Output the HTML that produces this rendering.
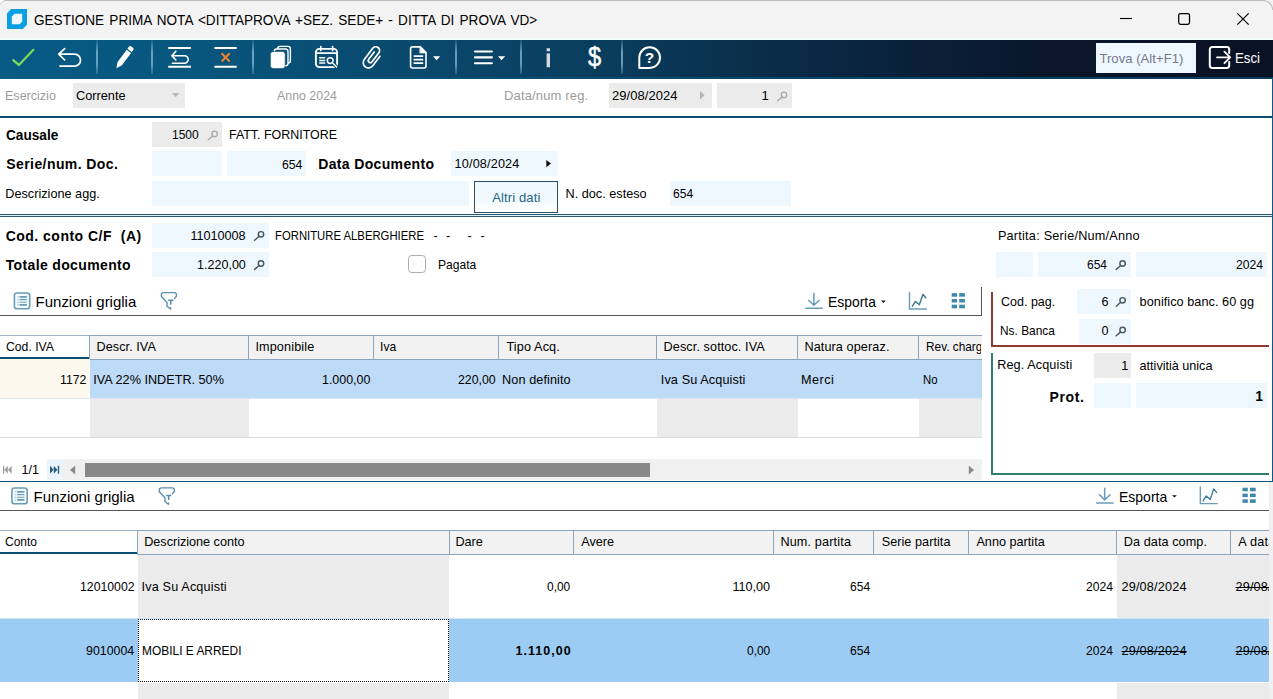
<!DOCTYPE html>
<html>
<head>
<meta charset="utf-8">
<title>Gestione Prima Nota</title>
<style>
*{box-sizing:border-box;margin:0;padding:0}
html,body{width:1273px;height:699px;overflow:hidden;background:#fff}
body{font-family:"Liberation Sans",sans-serif;font-size:12px;color:#000;position:relative}
.a{position:absolute;white-space:nowrap}
.f{position:absolute;background:#eef7fe}
.fg{position:absolute;background:#ebebeb}
.ln{position:absolute}
svg{position:absolute;overflow:visible}
.sep{position:absolute;top:40px;width:2px;height:34px;background:linear-gradient(180deg,rgba(120,175,205,.15),rgba(125,180,210,.8) 35%,rgba(125,180,210,.8) 70%,rgba(120,175,205,.25))}
.hc{position:absolute;background:#f2f2f2;border:1px solid #8ea4bc;border-right:none}
</style>
</head>
<body>
<!-- TITLE BAR -->
<div class="a" style="left:0;top:0;width:1273px;height:38px;background:#f3f3f3"></div>
<div class="a" style="left:4px;top:0;width:1260px;height:1px;background:#bdbdbd"></div>
<div class="a" style="left:0;top:38px;width:1273px;height:2px;background:#f4fbfd"></div>
<svg style="left:0;top:0" width="6" height="6" viewBox="0 0 6 6"><path d="M0 0H5L0 4Z" fill="#fff"/><path d="M0 4.2L5.2 0" stroke="#c4c4c4" stroke-width="1" fill="none"/></svg>
<svg style="left:1261px;top:0" width="12" height="12" viewBox="0 0 12 12"><path d="M2 0.5A9.5 9.5 0 0 1 11.6 10" stroke="#c2c2c2" stroke-width="1.2" fill="none"/></svg>
<svg style="left:7px;top:9px" width="20" height="20" viewBox="0 0 20 20"><path d="M4.2 0H20V15.8L15.8 20H0V4.2Z" fill="#0a9fe0"/><path d="M7.6 4.8H15.2V12.6L12.6 15.2H4.8V7.6Z" fill="#eef8fd"/></svg>
<svg style="left:1120px;top:12px" width="12" height="12" viewBox="0 0 12 12"><path d="M0 6.5H12" stroke="#000" stroke-width="1.1"/></svg>
<svg style="left:1178px;top:13px" width="12" height="12" viewBox="0 0 12 12"><rect x="0.7" y="0.6" width="10.8" height="10.7" rx="1.7" fill="none" stroke="#000" stroke-width="1.25"/></svg>
<svg style="left:1237px;top:13px" width="12" height="12" viewBox="0 0 12 12"><path d="M0.3 0.3L11.7 11.7M11.7 0.3L0.3 11.7" stroke="#000" stroke-width="1.2"/></svg>

<!-- TOOLBAR -->
<div class="a" style="left:0;top:40px;width:1273px;height:38px;background:linear-gradient(90deg,#075b85 0%,#08567e 15%,#0a4c71 28%,#0a4365 40%,#0a3a59 50%,#0a2d49 60%,#0a223b 70%,#0a182d 80%,#0a1327 90%,#0a1225 100%)"></div>
<div class="a" style="left:0;top:77px;width:1273px;height:1.5px;background:linear-gradient(90deg,#0a5a82,#0b4568 60%,#0c3a58)"></div>
<div class="sep" style="left:96px"></div>
<div class="sep" style="left:151px"></div>
<div class="sep" style="left:252px"></div>
<div class="sep" style="left:455px"></div>
<div class="sep" style="left:520px"></div>
<div class="sep" style="left:621px"></div>
<svg style="left:0;top:40px" width="700" height="38" viewBox="0 40 700 38" fill="none" stroke-linecap="round" stroke-linejoin="round">
<!-- check -->
<path d="M12.6 59.6L18.9 64.9L33.9 49.3" stroke="#7fdc5a" stroke-width="2.2" stroke-linecap="butt" stroke-linejoin="miter"/>
<!-- undo -->
<path d="M64.7 48.6L58.7 54.2L64.7 60M58.9 54.2H74.6A5.95 5.95 0 0 1 74.6 66.1H60" stroke="#fff" stroke-width="1.7"/>
<!-- pencil -->
<g transform="translate(116.4,68.2) rotate(36.5)" fill="#fff" stroke="none"><path d="M0 0L-2.7 -5.6V-21H2.7V-5.6Z"/><path d="M-2.7 -22.2V-24.6A1.8 1.8 0 0 1 -0.9 -26.4H0.9A1.8 1.8 0 0 1 2.7 -24.6V-22.2Z"/></g>
<!-- row undo -->
<path d="M168.2 47.9H190.9M168.2 66.8H190.9" stroke="#fff" stroke-width="2" stroke-linecap="butt"/>
<path d="M175.8 51.4L171.8 55.7L175.8 59.9M172 55.7H184.4A3.8 3.8 0 0 1 184.4 63.3H172.4" stroke="#fff" stroke-width="1.6"/>
<!-- row delete -->
<path d="M214.4 47.9H236.7M214.4 66.8H236.7" stroke="#fff" stroke-width="2" stroke-linecap="butt"/>
<path d="M221.6 53.3L229.7 61.5M229.7 53.3L221.6 61.5" stroke="#f0802f" stroke-width="2" stroke-linecap="butt"/>
<!-- copy -->
<rect x="277.6" y="46.4" width="12.8" height="16.6" rx="2.6" stroke="#fff" stroke-width="1.4"/>
<rect x="274.2" y="49" width="13.8" height="16.8" rx="2.6" fill="#0a4f75" stroke="#fff" stroke-width="1.4"/>
<rect x="270.4" y="51.4" width="14.8" height="17.2" rx="3" fill="#fff" stroke="#0a4f75" stroke-width="0.6"/>
<!-- calendar -->
<rect x="315.9" y="48.9" width="21.2" height="18.2" rx="3.4" stroke="#fff" stroke-width="1.9"/>
<path d="M315.8 53.2H337.2" stroke="#fff" stroke-width="1.7"/>
<path d="M320.8 46.6V50.4M332.6 46.6V50.4" stroke="#fff" stroke-width="1.7"/>
<path d="M319.2 57.8H325.2M319.2 60.4H325.2M319.2 63H325.2" stroke="#fff" stroke-width="1.5" stroke-linecap="butt"/>
<circle cx="330.2" cy="60.6" r="2.9" fill="#0a4568" stroke="#fff" stroke-width="1.5"/>
<path d="M332.4 62.8L336.8 67.2" stroke="#0a4568" stroke-width="3.4" stroke-linecap="butt"/>
<path d="M332.4 62.8L336.6 67" stroke="#fff" stroke-width="1.6"/>
<!-- paperclip -->
<g transform="translate(372.5,57.4) rotate(37)" stroke="#fff" stroke-width="1.7"><path d="M5.3 -5.4V6.6A5.3 5.3 0 0 1 -5.3 6.6V-7.4A3.8 3.8 0 0 1 2.3 -7.4V3.8A2.1 2.1 0 0 1 -1.9 3.8V-5.4"/></g>
<!-- document -->
<path d="M412.6 46.9H420.4L426 52.6V66A2 2 0 0 1 424 68H412.6A2 2 0 0 1 410.6 66V48.9A2 2 0 0 1 412.6 46.9Z" stroke="#fff" stroke-width="1.6"/>
<path d="M420.2 46.6L426.4 52.9H420.2Z" fill="#fff" stroke="#fff" stroke-width="0.8"/>
<path d="M413.6 56.1H423.2M413.6 59.6H423.2M413.6 63.1H423.2" stroke="#fff" stroke-width="1.7" stroke-linecap="butt"/>
<path d="M433 56.2H440.2L436.6 60.2Z" fill="#fff" stroke="none"/>
<!-- hamburger -->
<path d="M475 51.5H491.9M475 57.4H491.9M475 63.3H491.9" stroke="#fff" stroke-width="2.1"/>
<path d="M498 56.3H505.2L501.6 60.2Z" fill="#fff" stroke="none"/>
<!-- info -->
<rect x="546.6" y="48.3" width="3.4" height="2.9" fill="#d5dadf" stroke="none"/>
<rect x="546.6" y="53.4" width="3.4" height="13.8" fill="#d5dadf" stroke="none"/>
<!-- help -->
<path d="M649.7 47.3A10.3 10.3 0 0 1 649.7 67.9H639.3V57.6A10.3 10.3 0 0 1 649.7 47.3Z" stroke="#fff" stroke-width="2"/>
</svg>
<div class="a" id="dol" style="-webkit-text-stroke:0.45px #fff;left:588px;top:42.6px;font-size:27px;line-height:28px;color:#fff;transform-origin:0 0;transform:scaleX(0.88)">$</div>
<div class="a" id="qm" style="left:644.8px;top:49.6px;font-size:15.5px;line-height:16px;color:#fff;font-weight:bold">?</div>
<div class="a" style="left:1096px;top:43px;width:100px;height:30px;background:#eef7fe"></div>
<svg style="left:1200px;top:40px" width="40" height="38" viewBox="1200 40 40 38" fill="none" stroke="#fff" stroke-linecap="round" stroke-linejoin="round">
<path d="M1229.2 53V49.4A2.4 2.4 0 0 0 1226.8 47H1212.2A2.4 2.4 0 0 0 1209.8 49.4V65.6A2.4 2.4 0 0 0 1212.2 68H1226.8A2.4 2.4 0 0 0 1229.2 65.6V62" stroke-width="2"/>
<path d="M1217 57.4H1229.8M1224.4 51.6L1230.2 57.4L1224.4 63.2" stroke-width="1.8"/>
</svg>

<!-- ROW 1 -->
<div class="fg" style="left:73px;top:83px;width:112px;height:25px"></div>
<svg style="left:171.6px;top:93px" width="8" height="5" viewBox="0 0 8 5"><path d="M0 0H7.4L3.7 4.2Z" fill="#b8b8b8"/></svg>
<div class="fg" style="left:609px;top:83px;width:103px;height:25px"></div>
<svg style="left:700px;top:91px" width="5" height="9" viewBox="0 0 5 9"><path d="M0 0L4.6 4.2L0 8.4Z" fill="#b4b4b4"/></svg>
<div class="fg" style="left:717px;top:83px;width:75px;height:25px"></div>
<div class="ln" style="left:0;top:116px;width:1273px;height:2px;background:#0a4e74"></div>

<!-- CAUSALE SECTION -->
<div class="fg" style="left:152px;top:122px;width:70px;height:25px"></div>
<div class="f" style="left:152px;top:151px;width:70px;height:25px"></div>
<div class="f" style="left:227px;top:151px;width:79px;height:25px"></div>
<div class="f" style="left:451px;top:151px;width:107px;height:25px"></div>
<svg style="left:546px;top:160px" width="6" height="8" viewBox="0 0 6 8"><path d="M0.3 0L5 3.6L0.3 7.2Z" fill="#111"/></svg>
<div class="f" style="left:152px;top:181px;width:317px;height:25px"></div>
<div class="f" style="left:670px;top:181px;width:121px;height:25px"></div>
<div class="a" style="left:474px;top:181px;width:84.4px;height:32px;background:linear-gradient(180deg,#edf7fe 0%,#f2f9fe 60%,#fff 100%);border:1px solid #2a4f66"></div>
<div class="ln" style="left:0;top:214px;width:1273px;height:3px;background:#d8f4fa;border-top:1px solid #2d5870;border-bottom:1px solid #2d5870"></div>


<!-- CONTO SECTION -->
<div class="f" style="left:152px;top:223px;width:117px;height:25px"></div>
<div class="f" style="left:152px;top:252px;width:117px;height:25px"></div>
<div class="a" style="left:407.8px;top:255.4px;width:17.8px;height:18px;border:1.3px solid #adadad;border-radius:3.5px;background:#fdfdfd"></div>
<div class="f" style="left:996px;top:252px;width:37px;height:25px"></div>
<div class="f" style="left:1038px;top:252px;width:93px;height:25px"></div>
<div class="f" style="left:1136px;top:252px;width:131px;height:25px"></div>

<!-- GRID 1 toolbar -->
<div class="ln" style="left:0;top:315px;width:982px;height:1px;background:#555"></div>
<div class="ln" style="left:981px;top:287px;width:1px;height:29px;background:#555"></div>

<!-- GRID 1 -->
<div class="a" style="left:0;top:335px;width:89px;height:24px;border-top:1px solid #9fb2c6;border-bottom:2px solid #0a4e74;background:#fff"></div>
<div class="hc" style="left:89px;top:335px;width:160px;height:25px"></div>
<div class="hc" style="left:248px;top:335px;width:126px;height:25px"></div>
<div class="hc" style="left:373px;top:335px;width:126px;height:25px"></div>
<div class="hc" style="left:498px;top:335px;width:159px;height:25px"></div>
<div class="hc" style="left:656px;top:335px;width:142px;height:25px"></div>
<div class="hc" style="left:797px;top:335px;width:122px;height:25px"></div>
<div class="hc" style="left:918px;top:335px;width:64px;height:25px"></div>
<div class="a" style="left:0;top:359px;width:90px;height:39px;background:#fdf8ee"></div>
<div class="a" style="left:90px;top:360px;width:892px;height:38px;background:#bddaf7"></div>
<div class="a" style="left:0;top:398px;width:982px;height:1px;background:#dfe5ec"></div>
<div class="fg" style="left:90px;top:399px;width:159px;height:38px"></div>
<div class="fg" style="left:657px;top:399px;width:141px;height:38px"></div>
<div class="fg" style="left:919px;top:399px;width:63px;height:38px"></div>
<div class="ln" style="left:0;top:437px;width:982px;height:1px;background:#dcdcdc"></div>
<!-- pager -->
<div class="a" style="left:62px;top:458.7px;width:919.8px;height:21.6px;background:#f0f0f0"></div>
<div class="a" style="left:47.2px;top:458.7px;width:15px;height:21.6px;background:#eaf4fc"></div>
<div class="a" style="left:85px;top:462.8px;width:564.8px;height:14px;background:#888"></div>
<svg style="left:0;top:458px" width="982" height="24" viewBox="0 458 982 24">
<path d="M3 465.8H4.2V473.8H3ZM7.8 465.8V473.8L4.3 469.8ZM11.6 465.8V473.8L8 469.8Z" fill="#9c9c9c"/>
<path d="M50 465.8V473.8L53.6 469.8ZM53.8 465.8V473.8L57.4 469.8ZM57.8 465.8H59.2V473.8H57.8Z" fill="#2a5f7c"/>
<path d="M75.2 465.4V474.4L70 469.9Z" fill="#8a8a8a"/>
<path d="M968.8 465.4V474.4L974 469.9Z" fill="#8a8a8a"/>
</svg>
<div class="ln" style="left:0;top:480.6px;width:1273px;height:1.4px;background:#0d4f78"></div>

<!-- GRID 2 toolbar -->
<div class="ln" style="left:0;top:510px;width:1269px;height:1px;background:#555"></div>

<!-- GRID 2 -->
<div class="a" style="left:0;top:530px;width:137px;height:24px;border-top:1px solid #9fb2c6;border-bottom:2px solid #0a4e74;background:#fff"></div>
<div class="hc" style="left:137px;top:530px;width:313px;height:25px"></div>
<div class="hc" style="left:449px;top:530px;width:125px;height:25px"></div>
<div class="hc" style="left:573px;top:530px;width:201px;height:25px"></div>
<div class="hc" style="left:773px;top:530px;width:101px;height:25px"></div>
<div class="hc" style="left:873px;top:530px;width:96px;height:25px"></div>
<div class="hc" style="left:968px;top:530px;width:149px;height:25px"></div>
<div class="hc" style="left:1116px;top:530px;width:115px;height:25px"></div>
<div class="hc" style="left:1230px;top:530px;width:39px;height:25px"></div>
<div class="fg" style="left:138px;top:555px;width:311px;height:63.5px"></div>
<div class="fg" style="left:1117px;top:555px;width:152px;height:63px"></div>
<div class="a" style="left:0;top:618px;width:1269px;height:1px;background:#cde3f8"></div>
<div class="a" style="left:0;top:619px;width:1269px;height:63px;background:#9ccbf3"></div>
<div class="a" style="left:138px;top:619px;width:311px;height:63px;background:#fff;border:1px dotted #111"></div>
<div class="fg" style="left:138px;top:683px;width:311px;height:16px"></div>
<div class="fg" style="left:1117px;top:683px;width:152px;height:16px"></div>

<!-- RIGHT PANEL fields -->
<div class="f" style="left:1077px;top:289px;width:54px;height:25px"></div>
<div class="f" style="left:1079px;top:319px;width:52px;height:24.5px"></div>
<div class="fg" style="left:1094px;top:353px;width:37px;height:25px"></div>
<div class="f" style="left:1094px;top:383px;width:37px;height:25px"></div>
<div class="f" style="left:1136px;top:383px;width:131px;height:25px"></div>

<!-- magnifiers -->
<svg style="left:0;top:0" width="1273" height="699" viewBox="0 0 1273 699" fill="none" stroke-linecap="round">
<g stroke="#4a5663" stroke-width="1.45">
<g id="mg"><circle cx="261" cy="234.3" r="2.7"/><path d="M259.1 236.3L254.6 240.2"/></g>
<g transform="translate(0,29.2)"><circle cx="261" cy="234.3" r="2.7"/><path d="M259.1 236.3L254.6 240.2"/></g>
<g transform="translate(861.6,29.2)"><circle cx="261" cy="234.3" r="2.7"/><path d="M259.1 236.3L254.6 240.2"/></g>
<g transform="translate(861.6,66)"><circle cx="261" cy="234.3" r="2.7"/><path d="M259.1 236.3L254.6 240.2"/></g>
<g transform="translate(861.6,95.6)"><circle cx="261" cy="234.3" r="2.7"/><path d="M259.1 236.3L254.6 240.2"/></g>
</g>
<g stroke="#a9a9a9" stroke-width="1.3">
<g transform="translate(-46.4,-100.4)"><circle cx="261" cy="234.3" r="2.7"/><path d="M259.1 236.3L254.6 240.2"/></g>
<g transform="translate(523,-139.4)"><circle cx="261" cy="234.3" r="2.7"/><path d="M259.1 236.3L254.6 240.2"/></g>
</g>
</svg>

<!-- grid toolbar icons -->
<svg style="left:0;top:0" width="1273" height="699" viewBox="0 0 1273 699" fill="none" stroke-linecap="round" stroke-linejoin="round">
<g id="lst" stroke="#6a9cba">
<rect x="14.4" y="293" width="15.3" height="15.8" rx="2.6" stroke-width="1.6" fill="#f4fcff"/>
<path d="M19.6 296.9H26.9M19.6 304.9H26.9" stroke-width="1.6" stroke-linecap="butt"/><path d="M19.6 299.6H26.9M19.6 302.3H26.9" stroke-width="1.1" stroke-linecap="butt"/>
<path d="M17.2 296.9H18.8M17.2 299.6H18.8M17.2 302.3H18.8M17.2 304.9H18.8" stroke-width="1.2" stroke-linecap="butt" stroke="#a9c6d8"/>
</g>
<g stroke="#6a9cba" transform="translate(-2.5,195)">
<rect x="14.4" y="293" width="15.3" height="15.8" rx="2.6" stroke-width="1.6" fill="#f4fcff"/>
<path d="M19.6 296.9H26.9M19.6 304.9H26.9" stroke-width="1.6" stroke-linecap="butt"/><path d="M19.6 299.6H26.9M19.6 302.3H26.9" stroke-width="1.1" stroke-linecap="butt"/>
<path d="M17.2 296.9H18.8M17.2 299.6H18.8M17.2 302.3H18.8M17.2 304.9H18.8" stroke-width="1.2" stroke-linecap="butt" stroke="#a9c6d8"/>
</g>
<!-- funnel -->
<g stroke="#5b8fae" stroke-width="1.4">
<path d="M174.4 298.4L176.4 296.2V294.5A1.9 1.9 0 0 0 174.5 292.6H163.3A1.9 1.9 0 0 0 161.4 294.5V296.4L167 302.4V306.2L170.6 309V307.6"/>
<path d="M168.2 300.2H173.4M170.8 300.2V304.7" stroke-width="1.5" stroke-linecap="butt"/>
</g>
<g stroke="#5b8fae" stroke-width="1.4" transform="translate(-2.1,195.3)">
<path d="M174.4 298.4L176.4 296.2V294.5A1.9 1.9 0 0 0 174.5 292.6H163.3A1.9 1.9 0 0 0 161.4 294.5V296.4L167 302.4V306.2L170.6 309V307.6"/>
<path d="M168.2 300.2H173.4M170.8 300.2V304.7" stroke-width="1.5" stroke-linecap="butt"/>
</g>
<!-- export 1 -->
<g stroke="#6a9cba" stroke-width="1.4">
<path d="M813.9 293.6V305M808.7 300.2L813.9 305.3L819.2 300.2M805.8 308.3H822.2" stroke-width="1.5"/>
<path d="M909.5 292.4V309H926.4" stroke-width="1.4"/>
<path d="M912.4 306.2L915.4 301.4L919.4 304.8L922.9 294.3L925.8 297.8" stroke-width="1.4" stroke="#3f7a99"/>
</g>
<path d="M881 300.6H885.8L883.4 303Z" fill="#111" stroke="none"/>
<g fill="#3f8aaa" stroke="none">
<rect x="951.7" y="293.1" width="5.3" height="3.6"/><rect x="959.2" y="293.1" width="5.7" height="3.6"/>
<rect x="951.7" y="299" width="5.3" height="3.5"/><rect x="959.2" y="299" width="5.7" height="3.5"/>
<rect x="951.7" y="304.7" width="5.3" height="3.6"/><rect x="959.2" y="304.7" width="5.7" height="3.6"/>
</g>
<!-- export 2 -->
<g transform="translate(290.8,194.6)">
<g stroke="#6a9cba" stroke-width="1.4">
<path d="M813.9 293.6V305M808.7 300.2L813.9 305.3L819.2 300.2M805.8 308.3H822.2" stroke-width="1.5"/>
<path d="M909.5 292.4V309H926.4" stroke-width="1.4"/>
<path d="M912.4 306.2L915.4 301.4L919.4 304.8L922.9 294.3L925.8 297.8" stroke-width="1.4" stroke="#3f7a99"/>
</g>
<path d="M881.2 300.6H886L883.6 303Z" fill="#111" stroke="none"/>
<g fill="#3f8aaa" stroke="none">
<rect x="951.7" y="293.1" width="5.3" height="3.6"/><rect x="959.2" y="293.1" width="5.7" height="3.6"/>
<rect x="951.7" y="299" width="5.3" height="3.5"/><rect x="959.2" y="299" width="5.7" height="3.5"/>
<rect x="951.7" y="304.7" width="5.3" height="3.6"/><rect x="959.2" y="304.7" width="5.7" height="3.6"/>
</g>
</g>
</svg>

<div class="a" style="left:33.80px;top:12.00px;font-size:15px;line-height:15px;transform-origin:0 0;transform:scaleX(0.9045);word-spacing:1.6px;">GESTIONE PRIMA NOTA &lt;DITTAPROVA +SEZ. SEDE+ - DITTA DI PROVA VD&gt;</div>
<div class="a" style="left:1099.40px;top:52.00px;font-size:13px;line-height:13px;letter-spacing:0.075px;color:#77778a;">Trova (Alt+F1)</div>
<div class="a" style="left:1234.72px;top:50.00px;font-size:15px;line-height:15px;transform-origin:0 0;transform:scaleX(0.8848);color:#fff;">Esci</div>
<div class="a" style="left:5.34px;top:89.00px;font-size:13px;line-height:13px;transform-origin:0 0;transform:scaleX(0.9647);color:#9b9b9b;">Esercizio</div>
<div class="a" style="left:76.40px;top:89.00px;font-size:13px;line-height:13px;transform-origin:0 0;transform:scaleX(0.9792);">Corrente</div>
<div class="a" style="left:276.50px;top:89.00px;font-size:13px;line-height:13px;transform-origin:0 0;transform:scaleX(0.9525);color:#9b9b9b;">Anno 2024</div>
<div class="a" style="left:504.00px;top:89.00px;font-size:13px;line-height:13px;letter-spacing:0.145px;color:#9b9b9b;">Data/num reg.</div>
<div class="a" style="left:612.00px;top:89.00px;font-size:13px;line-height:13px;letter-spacing:0.050px;">29/08/2024</div>
<div class="a" style="left:761.50px;top:89.00px;font-size:13px;line-height:13px;">1</div>
<div class="a" style="left:6.30px;top:128.00px;font-size:14px;line-height:14px;transform-origin:0 0;transform:scaleX(0.9737);font-weight:bold;">Causale</div>
<div class="a" style="left:171.60px;top:128.66px;font-size:12.67px;line-height:12.67px;transform-origin:0 0;transform:scaleX(0.9496);">1500</div>
<div class="a" style="left:229.32px;top:128.66px;font-size:12.67px;line-height:12.67px;transform-origin:0 0;transform:scaleX(0.9825);">FATT. FORNITORE</div>
<div class="a" style="left:6.30px;top:157.00px;font-size:14px;line-height:14px;letter-spacing:0.413px;font-weight:bold;">Serie/num. Doc.</div>
<div class="a" style="left:282.20px;top:158.66px;font-size:12.67px;line-height:12.67px;transform-origin:0 0;transform:scaleX(0.9675);">654</div>
<div class="a" style="left:318.20px;top:157.00px;font-size:14px;line-height:14px;letter-spacing:0.355px;font-weight:bold;">Data Documento</div>
<div class="a" style="left:454.60px;top:157.66px;font-size:12.67px;line-height:12.67px;letter-spacing:0.155px;">10/08/2024</div>
<div class="a" style="left:5.30px;top:187.66px;font-size:12.67px;line-height:12.67px;letter-spacing:0.016px;">Descrizione agg.</div>
<div class="a" style="left:492.30px;top:191.00px;font-size:13px;line-height:13px;letter-spacing:0.113px;color:#1f6685;">Altri dati</div>
<div class="a" style="left:565.50px;top:187.66px;font-size:12.67px;line-height:12.67px;letter-spacing:0.018px;">N. doc. esteso</div>
<div class="a" style="left:673.30px;top:187.66px;font-size:12.67px;line-height:12.67px;transform-origin:0 0;transform:scaleX(0.9532);">654</div>
<div class="a" style="left:5.70px;top:229.00px;font-size:14px;line-height:14px;letter-spacing:0.483px;font-weight:bold;white-space:pre;">Cod. conto C/F  (A)</div>
<div class="a" style="left:190.50px;top:229.66px;font-size:12.67px;line-height:12.67px;letter-spacing:-0.048px;">11010008</div>
<div class="a" style="left:275.41px;top:229.66px;font-size:12.67px;line-height:12.67px;transform-origin:0 0;transform:scaleX(0.8939);">FORNITURE ALBERGHIERE</div>
<div class="a" style="left:433.50px;top:229.66px;font-size:12.67px;line-height:12.67px;">-</div>
<div class="a" style="left:446.00px;top:229.66px;font-size:12.67px;line-height:12.67px;">-</div>
<div class="a" style="left:467.40px;top:229.66px;font-size:12.67px;line-height:12.67px;">-</div>
<div class="a" style="left:480.60px;top:229.66px;font-size:12.67px;line-height:12.67px;">-</div>
<div class="a" style="left:5.70px;top:258.00px;font-size:14px;line-height:14px;letter-spacing:0.361px;font-weight:bold;">Totale documento</div>
<div class="a" style="left:196.70px;top:258.67px;font-size:12.67px;line-height:12.67px;transform-origin:0 0;transform:scaleX(0.9913);">1.220,00</div>
<div class="a" style="left:437.54px;top:258.67px;font-size:12.67px;line-height:12.67px;transform-origin:0 0;transform:scaleX(0.9554);">Pagata</div>
<div class="a" style="left:997.90px;top:229.66px;font-size:12.67px;line-height:12.67px;letter-spacing:0.240px;">Partita: Serie/Num/Anno</div>
<div class="a" style="left:1087.30px;top:258.67px;font-size:12.67px;line-height:12.67px;transform-origin:0 0;transform:scaleX(0.9485);">654</div>
<div class="a" style="left:1236.30px;top:258.67px;font-size:12.67px;line-height:12.67px;transform-origin:0 0;transform:scaleX(0.9638);">2024</div>
<div class="a" style="left:1000.60px;top:295.67px;font-size:12.67px;line-height:12.67px;transform-origin:0 0;transform:scaleX(0.9876);">Cod. pag.</div>
<div class="a" style="left:1101.40px;top:295.67px;font-size:12.67px;line-height:12.67px;">6</div>
<div class="a" style="left:1139.60px;top:295.67px;font-size:12.67px;line-height:12.67px;letter-spacing:0.055px;">bonifico banc. 60 gg</div>
<div class="a" style="left:999.66px;top:324.67px;font-size:12.67px;line-height:12.67px;transform-origin:0 0;transform:scaleX(0.9408);">Ns. Banca</div>
<div class="a" style="left:1101.40px;top:324.67px;font-size:12.67px;line-height:12.67px;">0</div>
<div class="a" style="left:997.20px;top:358.67px;font-size:12.67px;line-height:12.67px;letter-spacing:0.103px;">Reg. Acquisti</div>
<div class="a" style="left:1121.30px;top:359.67px;font-size:12.67px;line-height:12.67px;">1</div>
<div class="a" style="left:1139.60px;top:359.67px;font-size:12.67px;line-height:12.67px;letter-spacing:-0.024px;">attivitià unica</div>
<div class="a" style="left:1049.60px;top:390.00px;font-size:14px;line-height:14px;letter-spacing:0.600px;font-weight:bold;">Prot.</div>
<div class="a" style="left:1255.30px;top:389.00px;font-size:14px;line-height:14px;font-weight:bold;">1</div>
<div class="a" style="left:35.60px;top:294.00px;font-size:15px;line-height:15px;letter-spacing:-0.017px;">Funzioni griglia</div>
<div class="a" style="left:828.27px;top:294.00px;font-size:15px;line-height:15px;transform-origin:0 0;transform:scaleX(0.9268);">Esporta</div>
<div class="a" style="left:5.50px;top:340.67px;font-size:12.67px;line-height:12.67px;transform-origin:0 0;transform:scaleX(0.9647);">Cod. IVA</div>
<div class="a" style="left:96.50px;top:340.67px;font-size:12.67px;line-height:12.67px;letter-spacing:0.055px;">Descr. IVA</div>
<div class="a" style="left:255.40px;top:340.67px;font-size:12.67px;line-height:12.67px;letter-spacing:0.126px;">Imponibile</div>
<div class="a" style="left:380.44px;top:340.67px;font-size:12.67px;line-height:12.67px;transform-origin:0 0;transform:scaleX(0.9613);">Iva</div>
<div class="a" style="left:506.40px;top:340.67px;font-size:12.67px;line-height:12.67px;letter-spacing:0.140px;">Tipo Acq.</div>
<div class="a" style="left:663.60px;top:340.67px;font-size:12.67px;line-height:12.67px;letter-spacing:0.087px;">Descr. sottoc. IVA</div>
<div class="a" style="left:804.40px;top:340.67px;font-size:12.67px;line-height:12.67px;letter-spacing:0.100px;">Natura operaz.</div>
<div class="a" style="left:0;top:0;width:981px;height:699px;overflow:hidden"><div class="a" style="left:925.56px;top:340.67px;font-size:12.67px;line-height:12.67px;transform-origin:0 0;transform:scaleX(0.9355);">Rev. charge</div></div>
<div class="a" style="left:59.80px;top:373.67px;font-size:12.67px;line-height:12.67px;transform-origin:0 0;transform:scaleX(0.9713);">1172</div>
<div class="a" style="left:93.30px;top:373.67px;font-size:12.67px;line-height:12.67px;">IVA 22% INDETR. 50%</div>
<div class="a" style="left:321.80px;top:373.67px;font-size:12.67px;line-height:12.67px;transform-origin:0 0;transform:scaleX(0.9812);">1.000,00</div>
<div class="a" style="left:457.50px;top:373.67px;font-size:12.67px;line-height:12.67px;transform-origin:0 0;transform:scaleX(0.9721);">220,00</div>
<div class="a" style="left:502.00px;top:373.67px;font-size:12.67px;line-height:12.67px;letter-spacing:0.099px;">Non definito</div>
<div class="a" style="left:660.80px;top:373.67px;font-size:12.67px;line-height:12.67px;letter-spacing:0.114px;">Iva Su Acquisti</div>
<div class="a" style="left:801.00px;top:373.67px;font-size:12.67px;line-height:12.67px;letter-spacing:0.444px;">Merci</div>
<div class="a" style="left:922.50px;top:373.67px;font-size:12.67px;line-height:12.67px;transform-origin:0 0;transform:scaleX(0.8978);">No</div>
<div class="a" style="left:21.50px;top:463.75px;font-size:12.5px;line-height:12.5px;letter-spacing:-0.019px;">1/1</div>
<div class="a" style="left:33.50px;top:489.00px;font-size:15px;line-height:15px;letter-spacing:0.017px;">Funzioni griglia</div>
<div class="a" style="left:1119.07px;top:489.00px;font-size:15px;line-height:15px;transform-origin:0 0;transform:scaleX(0.9326);">Esporta</div>
<div class="a" style="left:4.60px;top:535.66px;font-size:12.67px;line-height:12.67px;transform-origin:0 0;transform:scaleX(0.9484);">Conto</div>
<div class="a" style="left:144.20px;top:535.66px;font-size:12.67px;line-height:12.67px;letter-spacing:-0.017px;">Descrizione conto</div>
<div class="a" style="left:455.40px;top:535.66px;font-size:12.67px;line-height:12.67px;letter-spacing:-0.033px;">Dare</div>
<div class="a" style="left:581.20px;top:535.66px;font-size:12.67px;line-height:12.67px;">Avere</div>
<div class="a" style="left:780.40px;top:535.66px;font-size:12.67px;line-height:12.67px;letter-spacing:0.146px;">Num. partita</div>
<div class="a" style="left:881.70px;top:535.66px;font-size:12.67px;line-height:12.67px;letter-spacing:0.041px;">Serie partita</div>
<div class="a" style="left:976.40px;top:535.66px;font-size:12.67px;line-height:12.67px;letter-spacing:0.008px;">Anno partita</div>
<div class="a" style="left:1123.70px;top:535.66px;font-size:12.67px;line-height:12.67px;letter-spacing:0.084px;">Da data comp.</div>
<div class="a" style="left:0;top:0;width:1268.6px;height:699px;overflow:hidden"><div class="a" style="left:1238.30px;top:535.66px;font-size:12.67px;line-height:12.67px;letter-spacing:0.240px;">A data comp.</div></div>
<div class="a" style="left:79.90px;top:580.66px;font-size:12.67px;line-height:12.67px;transform-origin:0 0;transform:scaleX(0.9685);">12010002</div>
<div class="a" style="left:141.60px;top:580.66px;font-size:12.67px;line-height:12.67px;letter-spacing:0.143px;">Iva Su Acquisti</div>
<div class="a" style="left:546.90px;top:580.66px;font-size:12.67px;line-height:12.67px;transform-origin:0 0;transform:scaleX(0.9430);">0,00</div>
<div class="a" style="left:732.50px;top:580.66px;font-size:12.67px;line-height:12.67px;letter-spacing:-0.028px;">110,00</div>
<div class="a" style="left:850.30px;top:580.66px;font-size:12.67px;line-height:12.67px;transform-origin:0 0;transform:scaleX(0.9532);">654</div>
<div class="a" style="left:1086.40px;top:580.66px;font-size:12.67px;line-height:12.67px;transform-origin:0 0;transform:scaleX(0.9603);">2024</div>
<div class="a" style="left:1121.50px;top:580.66px;font-size:12.67px;line-height:12.67px;letter-spacing:0.177px;">29/08/2024</div>
<div class="a" style="left:0;top:0;width:1268.6px;height:699px;overflow:hidden"><div class="a" style="left:1235.50px;top:580.66px;font-size:12.67px;line-height:12.67px;letter-spacing:0.177px;text-decoration:line-through;">29/08/2024</div></div>
<div class="a" style="left:86.30px;top:644.66px;font-size:12.67px;line-height:12.67px;transform-origin:0 0;transform:scaleX(0.9768);">9010004</div>
<div class="a" style="left:141.66px;top:644.66px;font-size:12.67px;line-height:12.67px;transform-origin:0 0;transform:scaleX(0.9434);">MOBILI E ARREDI</div>
<div class="a" style="left:515.50px;top:644.75px;font-size:12.5px;line-height:12.5px;letter-spacing:1.026px;font-weight:bold;">1.110,00</div>
<div class="a" style="left:746.90px;top:644.66px;font-size:12.67px;line-height:12.67px;transform-origin:0 0;transform:scaleX(0.9430);">0,00</div>
<div class="a" style="left:850.30px;top:644.66px;font-size:12.67px;line-height:12.67px;transform-origin:0 0;transform:scaleX(0.9532);">654</div>
<div class="a" style="left:1086.40px;top:644.66px;font-size:12.67px;line-height:12.67px;transform-origin:0 0;transform:scaleX(0.9603);">2024</div>
<div class="a" style="left:1121.50px;top:644.66px;font-size:12.67px;line-height:12.67px;letter-spacing:0.177px;text-decoration:line-through;">29/08/2024</div>
<div class="a" style="left:0;top:0;width:1268.6px;height:699px;overflow:hidden"><div class="a" style="left:1235.50px;top:644.66px;font-size:12.67px;line-height:12.67px;letter-spacing:0.177px;text-decoration:line-through;">29/08/2024</div></div>

<!-- overlays / right panels -->
<div class="a" style="left:1269px;top:482px;width:4px;height:217px;background:#f0f0f0"></div>
<div class="ln" style="left:1271.7px;top:78.4px;width:1.3px;height:403.6px;background:#0d5784"></div>
<div class="ln" style="left:991px;top:292px;width:2px;height:55px;background:#8e3a30"></div>
<div class="ln" style="left:991px;top:345px;width:277.8px;height:2px;background:#8e3a30"></div>
<div class="ln" style="left:991px;top:353px;width:2px;height:122px;background:#2f7f6e"></div>
<div class="ln" style="left:991px;top:473px;width:277.8px;height:2px;background:#2f7f6e"></div>

</body>
</html>
